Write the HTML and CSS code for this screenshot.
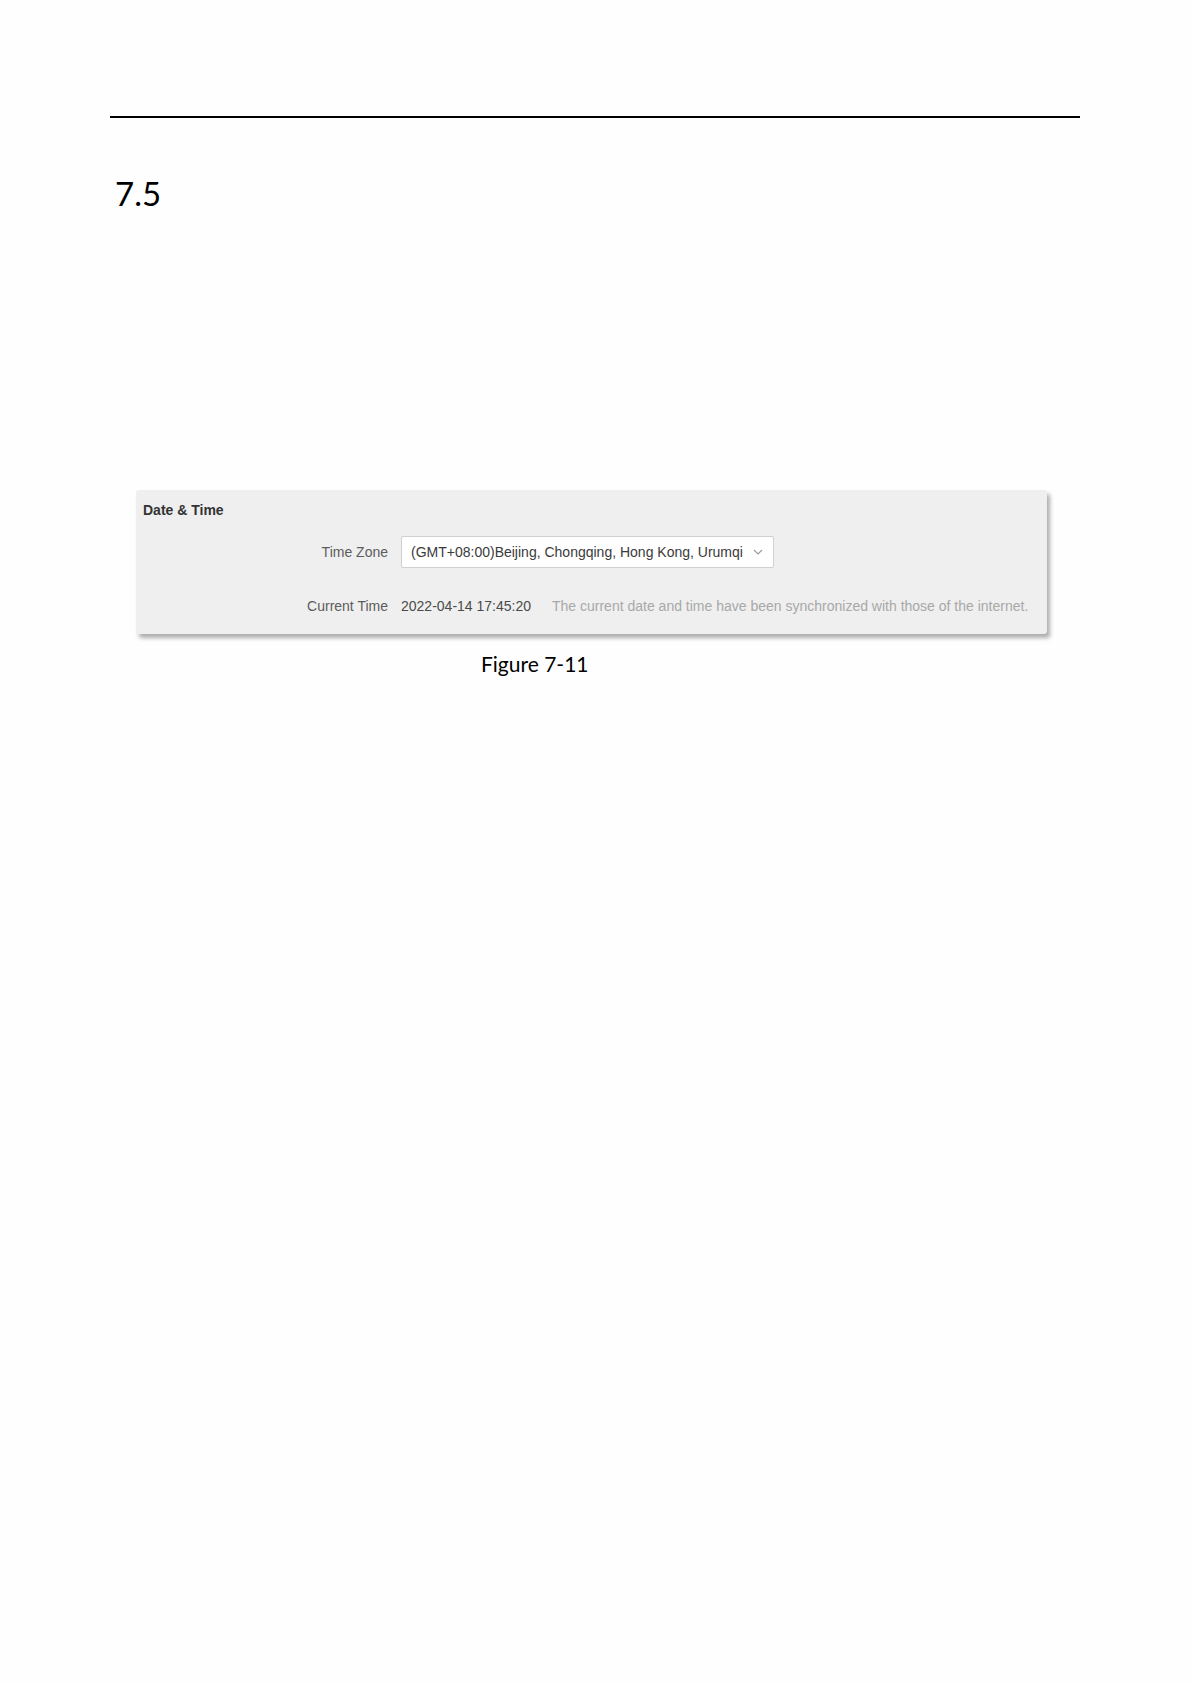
FILE: index.html
```html
<!DOCTYPE html>
<html lang="en">
<head>
<meta charset="utf-8">
<title>7.5 Date &amp; Time</title>
<link rel="stylesheet" href="styles.css">
</head>
<body>
<div class="page">
  <div class="rule"></div>
  <h2 class="sec">7.5</h2>
  <div class="figure">
    <div class="card">
      <div class="card-title">Date &amp; Time</div>
      <div class="row row-zone">
        <span class="label">Time Zone</span>
        <div class="select">
          <span class="select-text">(GMT+08:00)Beijing, Chongqing, Hong Kong, Urumqi</span>
          <svg class="chev" width="10" height="6" viewBox="0 0 10 6"><polyline points="1,1 5,5 9,1" fill="none" stroke="#9a9a9a" stroke-width="1.1"/></svg>
        </div>
      </div>
      <div class="row row-time">
        <span class="label">Current Time</span>
        <span class="value">2022-04-14 17:45:20</span>
        <span class="note">The current date and time have been synchronized with those of the internet.</span>
      </div>
    </div>
    <div class="caption">Figure 7-11</div>
  </div>
</div>
</body>
</html>
```

FILE: styles.css
```css
html, body {
  margin: 0;
  padding: 0;
  background: #fefefe;
}
.page {
  padding: 116px 0 0 110px;
  width: 970px;
}
.rule {
  height: 2px;
  background: #000;
}
.sec {
  margin: 55px 0 0 5px;
  font-family: Lato, "Open Sans", sans-serif;
  font-weight: 400;
  font-size: 33px;
  line-height: 40px;
  color: #000;
}
.figure {
  margin-top: 277px;
  padding-left: 26px;
}
.card {
  width: 911px;
  box-sizing: border-box;
  background: #efefef;
  border-radius: 3px;
  box-shadow: 3px 4px 4px rgba(0, 0, 0, 0.32);
  padding: 12px 7px 12px 7px;
  font-family: "Liberation Sans", Arial, sans-serif;
  font-size: 14px;
}
.card-title {
  font-weight: bold;
  color: #333;
  line-height: 16px;
}
.row {
  display: flex;
  align-items: center;
  gap: 13px;
}
.row-zone {
  margin-top: 18px;
  height: 32px;
}
.row-time {
  margin-top: 22px;
  height: 32px;
}
.label {
  width: 245px;
  text-align: right;
  color: #5c5c5c;
  flex: none;
}
.select {
  width: 373px;
  height: 32px;
  box-sizing: border-box;
  background: #fff;
  border: 1px solid #cfcfcf;
  border-radius: 2px;
  display: flex;
  align-items: center;
  justify-content: space-between;
  padding: 0 10px 0 9px;
  color: #3a3a3a;
}
.chev {
  display: block;
}
.value {
  color: #4a4a4a;
}
.note {
  margin-left: 8px;
  color: #a8a8a8;
}
.caption {
  margin: 17px 0 0 345px;
  font-family: Lato, "Open Sans", sans-serif;
  font-size: 21px;
  line-height: 26px;
  color: #000;
}
```
